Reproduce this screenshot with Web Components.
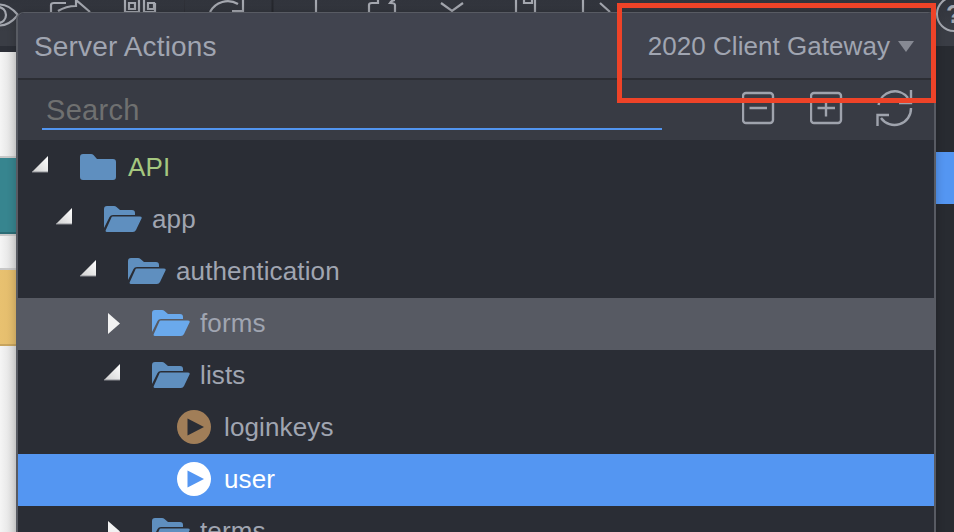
<!DOCTYPE html>
<html><head><meta charset="utf-8"><title>Server Actions</title>
<style>
html,body{margin:0;padding:0;background:#f2f2f2;overflow:hidden;}
body{width:954px;height:532px;font-family:"Liberation Sans",Arial,sans-serif;}
</style></head><body>
<sa-stage>
  <sa-toolbar slot="toolbar"></sa-toolbar>
  <sa-dialog slot="dialog" heading="Server Actions" server="2020 Client Gateway">
    <sa-row level="0" arrow="open" icon="closed" tone="api">API</sa-row>
    <sa-row level="1" arrow="open" icon="open">app</sa-row>
    <sa-row level="2" arrow="open" icon="open">authentication</sa-row>
    <sa-row level="3" arrow="closed" icon="open" state="hover">forms</sa-row>
    <sa-row level="3" arrow="open" icon="open">lists</sa-row>
    <sa-row level="4" icon="play">loginkeys</sa-row>
    <sa-row level="4" icon="play" state="selected">user</sa-row>
    <sa-row level="3" arrow="closed" icon="open">terms</sa-row>
  </sa-dialog>
  <sa-callout slot="callout"></sa-callout>
</sa-stage>
<script>
function tpl(html){const t=document.createElement('template');t.innerHTML=html;return t;}
function mount(el,t){el.attachShadow({mode:'open'}).appendChild(t.content.cloneNode(true));}

const stageT=tpl(`<style>
:host{display:block;position:relative;width:954px;height:532px;overflow:hidden;background:#f2f2f2;}
.body{display:flex;height:486px;}
.left{width:16px;display:flex;flex-direction:column;flex:none;}
.left div{flex:none;background:#f1f1f1;}
.mid{flex:1;}
.right{width:18px;flex:none;display:flex;flex-direction:column;background:#282b31;}
.blue{margin-top:106px;height:52px;background:#5496f2;}
.l0{height:6px;background:#2c2f37 !important}
.w{background:linear-gradient(90deg,#f5f5f5,#dcdcdc) !important}
.l1{height:104px}.g{height:2px;background:#c8c8c8 !important}
.teal{height:76px;background:linear-gradient(#37858f 97%,#2c6d76 97%) !important}
.l2{height:32px}
.yel{height:74px;background:linear-gradient(90deg,#e8c170,#e2bb6c) !important}
.yd{height:2px;background:#c7a45e !important}
.l3{flex:1 !important}
.dlg{position:absolute;left:16px;top:12px;}
</style>
<slot name="toolbar"></slot>
<div class="body">
  <div class="left"><div class="l0"></div><div class="w l1"></div><div class="g"></div><div class="teal"></div><div class="g"></div><div class="w l2"></div><div class="g"></div><div class="yel"></div><div class="yd"></div><div class="w l3"></div></div>
  <div class="mid"></div>
  <div class="right"><div class="blue"></div></div>
</div>
<div class="dlg"><slot name="dialog"></slot></div>
<slot name="callout"></slot>`);
customElements.define('sa-stage',class extends HTMLElement{constructor(){super();mount(this,stageT);}});

const toolbarT=tpl(`<style>
:host{display:flex;height:46px;background:linear-gradient(#31343c,#3a3d45 70%);overflow:hidden;color:#a4a7af;position:relative;}
svg{display:block;flex:none;fill:none;stroke:#a4a7af;stroke-width:2.2;}
.help{position:absolute;left:936px;top:-4px;width:36px;height:36px;border:2.4px solid #a4a7af;border-radius:50%;box-sizing:border-box;font:bold 26px/32px "Liberation Sans",sans-serif;text-align:center;color:#a4a7af;}
</style>
<svg width="954" height="46" viewBox="0 0 954 46">
  <path d="M-18 15 Q0 -6 18 15 Q0 36 -18 15Z"/><circle cx="-2" cy="15" r="8"/>
  <path d="M51 12 V5 Q51 3 54 3 H66 M58 11 Q66 6 76 6 V0 L90 12"/>
  <path d="M125 0 V12 H139 V0 M129 3 h6 v6 h-6z M144 0 V12 H155 V3 M148 3 h6 v6 h-6z"/>
  <path d="M184.500 0 V46" stroke="#2f3138" stroke-width="1"/>
  <path d="M210 12 A20 20 0 0 1 238 4 M243 0 V11 H232"/>
  <path d="M272.500 0 V46" stroke="#26282e" stroke-width="2"/>
  <path d="M316 0 V12"/>
  <path d="M369 12 V5 Q369 3 372 3 H378 V0 M395 12 V5 Q395 3 390 3 Q392 0 395 0"/>
  <path d="M441 3 L452 11 L463 3"/>
  <path d="M516 12 V0 M535 12 V0 M524 0 V3 H532 V0"/>
  <path d="M583 0 V12 M600 3 L610 12"/>
</svg>
<div class="help">?</div>`);
customElements.define('sa-toolbar',class extends HTMLElement{constructor(){super();mount(this,toolbarT);}});

const dialogT=tpl(`<style>
:host{display:flex;flex-direction:column;box-sizing:border-box;width:920px;height:532px;background:#2a2d35;border:solid #585b63;border-width:1px 2px 0 2px;border-radius:8px 8px 0 0;box-shadow:0 0 10px rgba(0,0,0,.22);overflow:hidden;}
.head{flex:none;height:65px;display:flex;align-items:center;justify-content:space-between;background:#41444f;padding:0 20px 0 16px;border-bottom:2px solid #2c2e34;color:#a0a5b1;}
.title{font-size:28px;line-height:1;position:relative;top:1px;letter-spacing:.15px;}
.server{display:flex;align-items:center;gap:8px;font-size:26px;line-height:1;letter-spacing:.05px;}
.caret{width:0;height:0;border:8px solid transparent;border-top:11px solid #868993;border-bottom:0;margin-top:2px;}
.bar{flex:none;height:60px;display:flex;align-items:flex-start;background:#383b44;padding-left:24px;}
.search{box-sizing:border-box;width:620px;height:50px;border-bottom:2px solid #5295ef;color:#6f7070;font-size:29px;line-height:60px;padding-left:4px;letter-spacing:.3px;}
.tools{display:flex;margin-left:80px;margin-top:10px;}
svg{display:block;flex:none;fill:none;stroke:#9fa3ad;stroke-width:2.4;}
.tree{flex:1;padding-top:2px;}
</style>
<div class="head"><div class="title"></div><div class="server"><span class="sv"></span><i class="caret"></i></div></div>
<div class="bar"><div class="search">Search</div>
 <div class="tools">
  <svg width="34" height="36" viewBox="0 0 34 36" style="margin-right:34px"><rect x="1" y="3" width="30" height="30" rx="3"/><path d="M7.500 18 H25"/></svg>
  <svg width="34" height="36" viewBox="0 0 34 36" style="margin-right:32px"><rect x="1" y="3" width="30" height="30" rx="3"/><path d="M7.500 18 H25 M16 9.500 V26.500"/></svg>
  <svg width="38" height="38" viewBox="0 0 38 38"><path d="M2.500 15 A16.500 16.500 0 0 1 32 8 M35 0 V13 H23"/><path d="M35 18 A16.500 16.500 0 0 1 5 28 M1.500 36 V25 H13"/></svg>
 </div></div>
<div class="tree"><slot></slot></div>`);
customElements.define('sa-dialog',class extends HTMLElement{constructor(){super();mount(this,dialogT);}
 connectedCallback(){this.shadowRoot.querySelector('.title').textContent=this.getAttribute('heading');this.shadowRoot.querySelector('.sv').textContent=this.getAttribute('server');}});

const rowT=tpl(`<style>
:host{display:flex;align-items:center;height:52px;font-size:26px;letter-spacing:.13px;color:#a0a5b1;padding-left:calc(14px + var(--level,0) * 24px);background:transparent;}
:host([state=hover]){background:#575a63;}
:host([state=selected]){background:#5496f2;color:#fff;}
:host([tone=api]){color:#a5c77f;}
.arrow{width:48px;flex:none;height:52px;position:relative;}
.arrow svg{position:absolute;left:0;}
.icon{width:48px;flex:none;height:52px;position:relative;}
.icon svg{position:absolute;left:0;top:12px;}
.text{line-height:52px;position:relative;top:-1px;white-space:nowrap;}
</style><div class="arrow"></div><div class="icon"></div><div class="text"><slot></slot></div>`);
const arrows={
 open:`<svg style="top:14px" width="16" height="17" viewBox="0 0 16 17"><defs><linearGradient id="a" x1="0" y1="1" x2="1" y2="0"><stop offset="0" stop-color="#d0d0d0"/><stop offset="1" stop-color="#fff"/></linearGradient></defs><path d="M0 16 L16 0 V16Z" fill="url(#a)"/><path d="M0 16 H16" stroke="#8e9096" stroke-width="1"/></svg>`,
 closed:`<svg style="top:15px" width="16" height="22" viewBox="0 0 16 22"><path d="M4 0 L16 10.500 L4 21Z" fill="#f2f2f2"/></svg>`
};
function icons(state){
 const c=state==='hover'?'#6aa9ec':'#5f8fbf';
 return {
 closed:`<svg width="36" height="26" viewBox="0 0 36 26"><path d="M0 3 Q0 0 3 0 H11 Q12.500 0 13.500 1 L17 5 H33 Q36 5 36 8 V23 Q36 26 33 26 H3 Q0 26 0 23Z" fill="${c}"/></svg>`,
 open:`<svg width="38" height="26" viewBox="0 0 38 26"><path d="M0 3 Q0 0 3 0 H10 Q11.500 0 12.500 1 L16 4 H28 Q31 4 31 7 V9 H9 Q6.500 9 5.500 11 L0 22Z" fill="${c}"/><path d="M8.500 10.500 H35.500 Q38.500 10.500 37.500 12.500 L32 24 Q31 26 29 26 H3 Q1 26 1.800 24 L7 12.500 Q7.500 10.500 8.500 10.500Z" fill="${c}"/></svg>`,
 play:state==='selected'
  ?`<svg width="36" height="34" viewBox="0 0 36 34" style="left:1px;top:8px"><circle cx="17" cy="17" r="17" fill="#fff"/><path d="M10.500 8.500 L27 17 L10.500 25.500Z" fill="#5496f2"/></svg>`
  :`<svg width="36" height="34" viewBox="0 0 36 34" style="left:1px;top:8px"><circle cx="17" cy="17" r="17" fill="#a17e58"/><path d="M10.500 8.500 L27 17 L10.500 25.500Z" fill="#2a2d35"/></svg>`
 };
}
customElements.define('sa-row',class extends HTMLElement{constructor(){super();mount(this,rowT);}
 connectedCallback(){
  this.style.setProperty('--level',this.getAttribute('level')||0);
  const a=this.getAttribute('arrow');
  if(a)this.shadowRoot.querySelector('.arrow').innerHTML=arrows[a];
  this.shadowRoot.querySelector('.icon').innerHTML=icons(this.getAttribute('state'))[this.getAttribute('icon')];
 }});

const calloutT=tpl(`<style>
:host{display:block;position:absolute;left:617px;top:3px;width:319px;height:100px;box-sizing:border-box;border:5px solid #ee4328;pointer-events:none;}
</style>`);
customElements.define('sa-callout',class extends HTMLElement{constructor(){super();mount(this,calloutT);}});
</script>
</body></html>
